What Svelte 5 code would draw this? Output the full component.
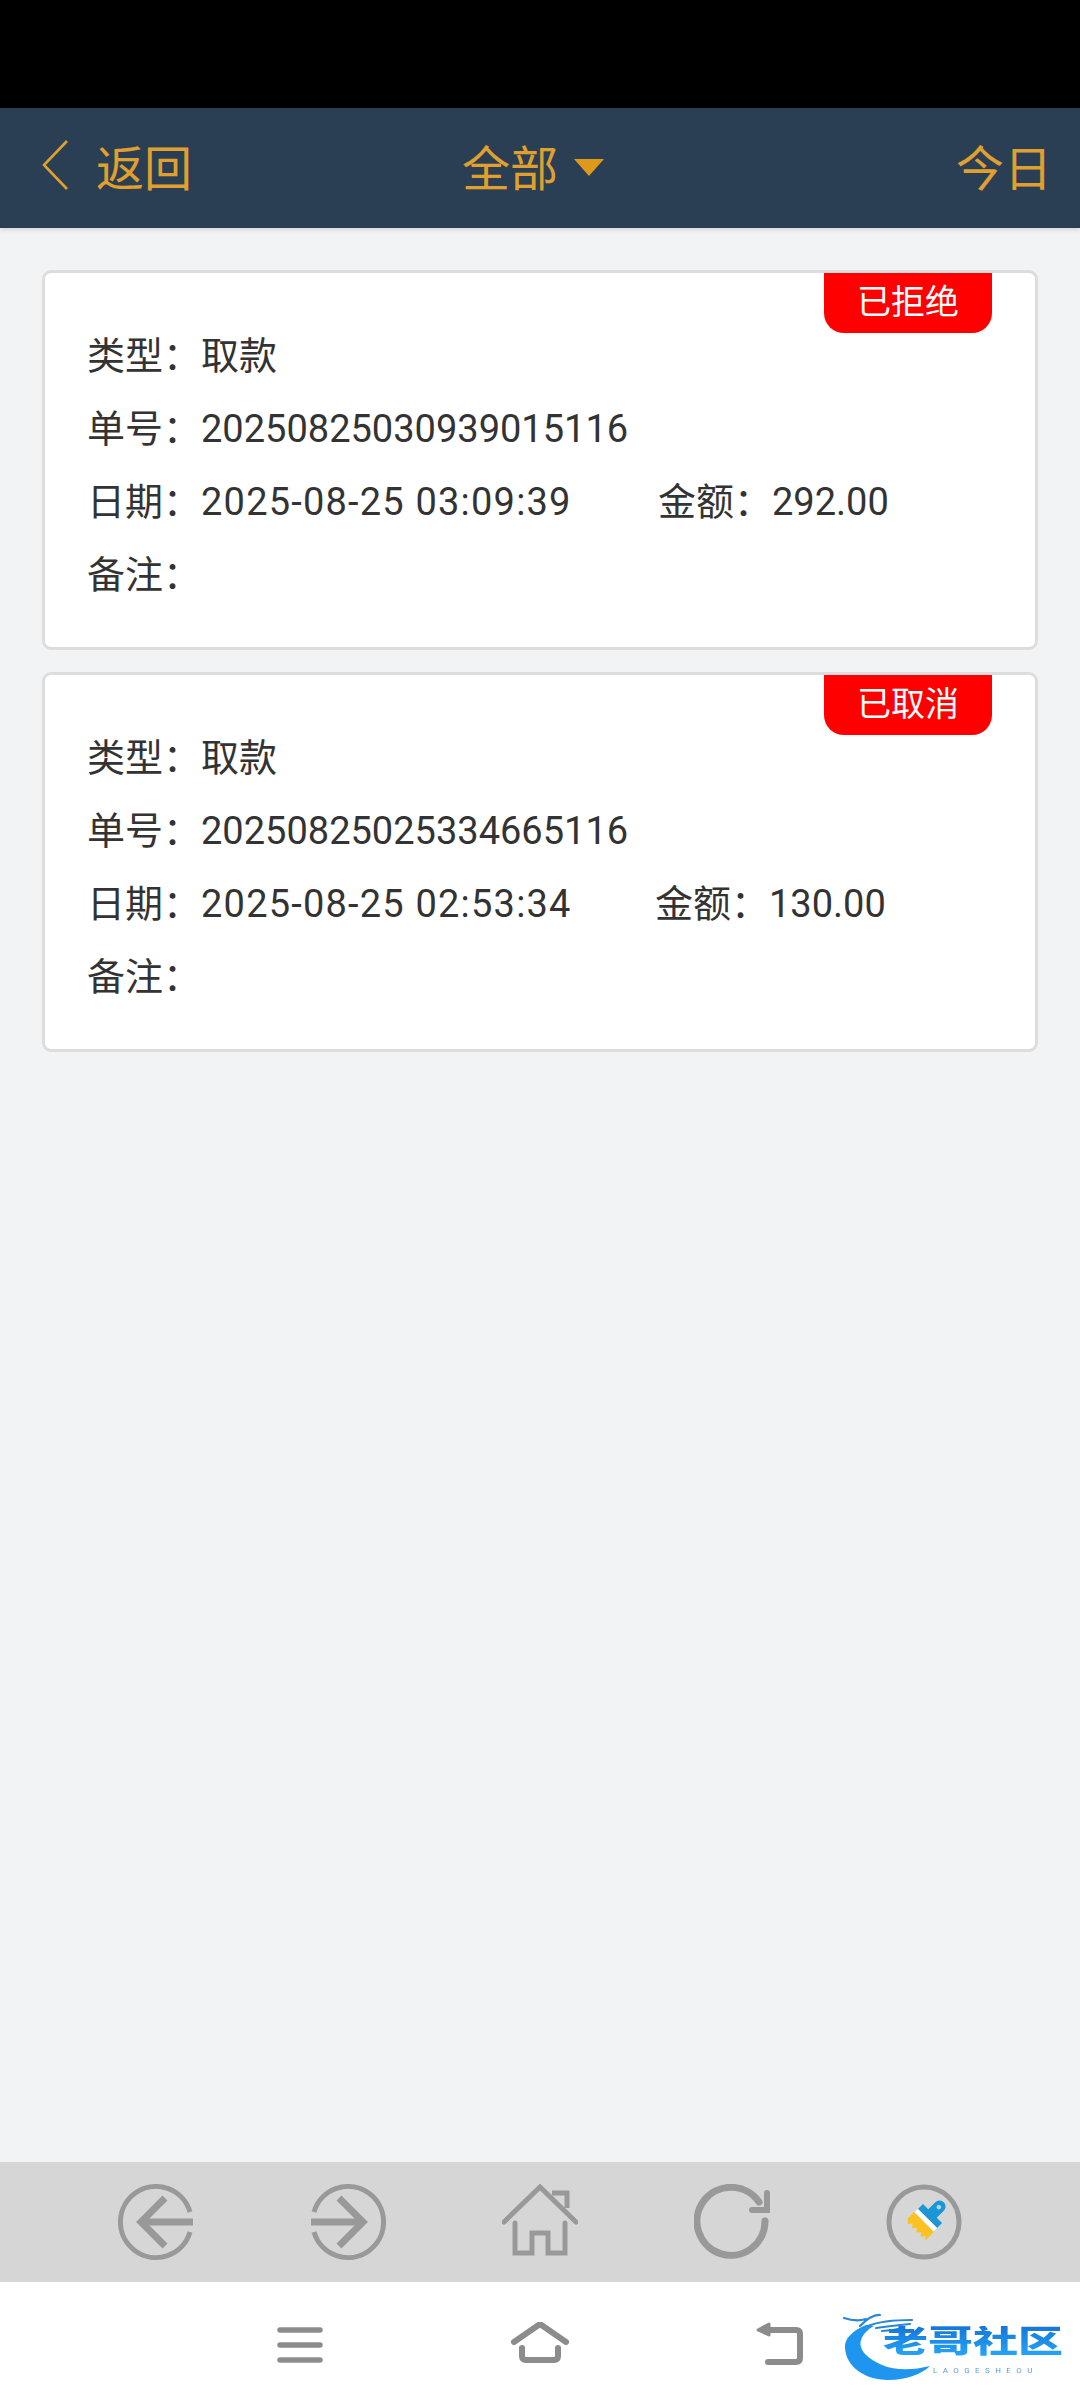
<script>
  const records = [
    { status: "已拒绝", type: "取款", no: "20250825030939015116", date: "2025-08-25 03:09:39", amount: "292.00", dateCol: 571 },
    { status: "已取消", type: "取款", no: "20250825025334665116", date: "2025-08-25 02:53:34", amount: "130.00", dateCol: 568 }
  ];
</script>

<div class="page">
  <div class="statusbar"></div>

  <header class="topbar">
    <div class="back">
      <svg width="30" height="52" viewBox="0 0 30 52">
        <path d="M27 2 L4 26 L27 50" fill="none" stroke="#e0a030" stroke-width="2.6" />
      </svg>
      <span>返回</span>
    </div>
    <div class="filter">
      <span>全部</span>
      <i class="caret"></i>
    </div>
    <div class="today">今日</div>
  </header>

  <main class="list">
    {#each records as r}
      <section class="card">
        <div class="badge">{r.status}</div>
        <p>类型：{r.type}</p>
        <p>单号：{r.no}</p>
        <p class="split">
          <span class="col" style="width: {r.dateCol}px">日期：<span class="date">{r.date}</span></span>
          <span>金额：{r.amount}</span>
        </p>
        <p>备注：</p>
      </section>
    {/each}
  </main>

  <div class="toolbar">
    <svg class="tool" viewBox="0 0 76 76">
      <path d="M72 28 A35.5 35.5 0 1 0 72 48" fill="none" stroke="#999" stroke-width="5" />
      <path d="M47 14 L23 38 L47 62" fill="none" stroke="#999" stroke-width="7" />
      <path d="M22 38 H75" stroke="#999" stroke-width="7" />
    </svg>
    <svg class="tool" viewBox="0 0 76 76">
      <path d="M4 28 A35.5 35.5 0 1 1 4 48" fill="none" stroke="#999" stroke-width="5" />
      <path d="M29 14 L53 38 L29 62" fill="none" stroke="#999" stroke-width="7" />
      <path d="M54 38 H1" stroke="#999" stroke-width="7" />
    </svg>
    <svg class="tool" viewBox="12 14 76 76">
      <path d="M14 52 L50 17 L86 52" fill="none" stroke="#999" stroke-width="5" stroke-linecap="round" />
      <path d="M62 23 H77 V38" fill="none" stroke="#999" stroke-width="5" />
      <path d="M25 53 V83 H42 V63 H58 V83 H75 V53" fill="none" stroke="#999" stroke-width="5" stroke-linecap="round" />
    </svg>
    <svg class="tool" viewBox="0 0 76 76">
      <path d="M71 37 A34 34 0 1 1 65 18" fill="none" stroke="#999" stroke-width="7" stroke-linecap="round" />
      <path d="M73 9 V26 H58" fill="none" stroke="#999" stroke-width="6" stroke-linecap="round" />
    </svg>
    <svg class="tool" viewBox="0 0 76 76">
      <circle cx="38" cy="38" r="35" fill="none" stroke="#999" stroke-width="5" />
      <g transform="rotate(45 38 38)">
        <path d="M24.5 33 V26 H32 V16 A6 6 0 0 1 44 16 V26 H51.5 V33 Z" fill="#1b97d5" />
        <circle cx="38" cy="17" r="2.3" fill="#a9d9f0" />
        <rect x="24.5" y="33" width="27" height="5" fill="#fff" />
        <path d="M24 38 H52 V50 L49 47 L46 51 L43 47 L40 51 L37 47 L34 51 L31 47 L28 51 L24 47 Z" fill="#fcc222" />
      </g>
    </svg>
  </div>

  <nav class="navbar">
    <svg class="nav-menu" viewBox="0 0 46 36">
      <path d="M3 3 H43 M3 18 H43 M3 33 H43" stroke="#8c8c8c" stroke-width="5.5" stroke-linecap="round" />
    </svg>
    <svg class="nav-home" viewBox="0 0 60 46">
      <path d="M4 20 L30 2 L56 20" fill="none" stroke="#8c8c8c" stroke-width="6" stroke-linecap="round" stroke-linejoin="round" />
      <path d="M12 26 V34 Q12 38 16 38 H44 Q48 38 48 34 V26" fill="none" stroke="#8c8c8c" stroke-width="6" stroke-linecap="round" />
    </svg>
    <svg class="nav-back" viewBox="0 0 50 44">
      <path d="M3 8 L14 2 V13 Z" fill="#8c8c8c" stroke="#8c8c8c" stroke-width="3" stroke-linejoin="round" />
      <path d="M12 8 H41 Q45 8 45 12 V36 Q45 40 41 40 H13" fill="none" stroke="#8c8c8c" stroke-width="6" stroke-linecap="round" />
    </svg>
    <div class="logo">
      <svg class="logo-ring" viewBox="0 0 250 100">
        <path d="M36 25 C22 31 14 39 15 48 C16 66 34 80 58 80 C76 80 92 74 100 66 C84 70 66 71 52 65 C38 59 28 50 31 40 C33 34 38 29 44 26 Z" fill="#1e96f0" />
        <path d="M14 18 Q26 22 36 19 M30 26 Q42 14 50 15 M38 26 Q52 20 82 20 M46 28 Q60 26 80 24 M52 31 Q62 31 72 28" fill="none" stroke="#2a86d6" stroke-width="2.2" stroke-linecap="round" />
      </svg>
      <span class="logo-cn">老哥社区</span>
      <span class="logo-en">LAOGESHEOU</span>
    </div>
  </nav>
</div>

<style>
  :global(body) {
    margin: 0;
    background: #f2f3f5;
  }

  .page {
    display: flex;
    flex-direction: column;
    height: 2408px;
    font-family: "Roboto", "Noto Sans CJK SC", sans-serif;
  }

  .statusbar {
    height: 108px;
    background: #000;
  }

  .topbar {
    box-sizing: border-box;
    height: 120px;
    display: grid;
    grid-template-columns: 1fr auto 1fr;
    align-items: center;
    padding: 0 28px 6px 40px;
    background: #2a3f54;
    color: #e0a030;
    font-size: 48px;
    box-shadow: 0 2px 4px rgba(0, 0, 0, 0.12);
  }

  .back {
    display: flex;
    align-items: center;
    gap: 26px;
  }

  .filter {
    display: flex;
    align-items: center;
    gap: 16px;
    margin-right: 26px;
  }

  .caret {
    width: 0;
    height: 0;
    margin-top: 4px;
    border-left: 15px solid transparent;
    border-right: 15px solid transparent;
    border-top: 17px solid #e0981a;
  }

  .today {
    justify-self: end;
  }

  .list {
    flex: 1;
    display: flex;
    flex-direction: column;
    gap: 22px;
    padding: 42px 42px 0;
  }

  .card {
    position: relative;
    box-sizing: border-box;
    height: 380px;
    padding: 47px 42px 0;
    background: #fff;
    border: 3px solid #ddd;
    border-radius: 9px;
    color: #333;
    font-size: 38px;
  }

  .card p {
    margin: 0;
    height: 73px;
    line-height: 73px;
    white-space: nowrap;
  }

  .split {
    display: flex;
  }

  .date {
    letter-spacing: 1.2px;
  }

  .badge {
    position: absolute;
    top: 0;
    right: 43px;
    width: 168px;
    height: 60px;
    line-height: 58px;
    text-align: center;
    background: #fe0000;
    border-radius: 0 0 20px 20px;
    color: #fff;
    font-size: 34px;
  }

  .toolbar {
    height: 120px;
    display: flex;
    align-items: center;
    justify-content: space-between;
    padding: 0 118px;
    background: #d6d6d6;
  }

  .tool {
    width: 76px;
    height: 76px;
  }

  .navbar {
    position: relative;
    height: 126px;
    background: #fff;
  }

  .nav-menu,
  .nav-home,
  .nav-back {
    position: absolute;
  }

  .nav-menu {
    left: 277px;
    top: 45px;
    width: 46px;
    height: 36px;
  }

  .nav-home {
    left: 510px;
    top: 40px;
    width: 60px;
    height: 46px;
  }

  .nav-back {
    left: 755px;
    top: 40px;
    width: 50px;
    height: 44px;
  }

  .logo {
    position: absolute;
    left: 830px;
    top: 18px;
    width: 250px;
    height: 100px;
    filter: blur(0.5px);
  }

  .logo-ring {
    position: absolute;
    left: 0;
    top: 0;
    width: 250px;
    height: 100px;
  }

  .logo-cn {
    position: absolute;
    left: 53px;
    top: 26px;
    font-size: 45px;
    line-height: 45px;
    font-weight: 900;
    white-space: nowrap;
    background: linear-gradient(#1576d8, #26a6f7);
    -webkit-background-clip: text;
    background-clip: text;
    color: transparent;
    transform: scaleY(0.68);
    transform-origin: left top;
  }

  .logo-en {
    position: absolute;
    left: 103px;
    top: 67px;
    font-size: 8px;
    line-height: 8px;
    letter-spacing: 5.4px;
    color: #5c9ed8;
  }
</style>
